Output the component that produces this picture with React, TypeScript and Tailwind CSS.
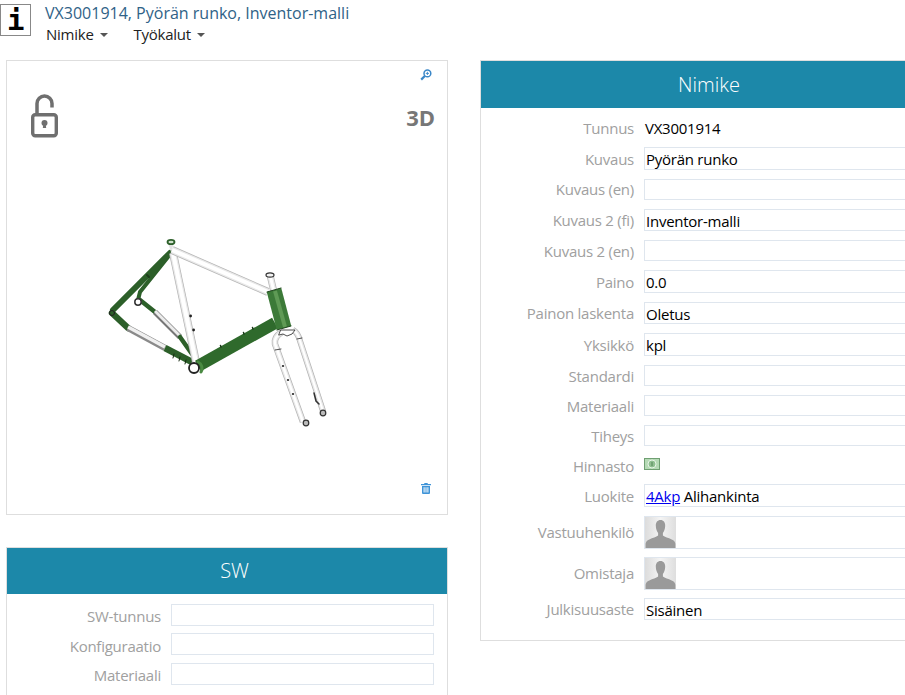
import { ReactNode } from "react";

const Unlock = () => (
  <svg width="30" height="44" viewBox="0 0 30 44" fill="none">
    <path d="M7 19V9.500a7.500 7.500 0 0 1 15 0V13.500" stroke="#6f6f6f" strokeWidth="3.500" />
    <rect x="2.700" y="20.700" width="23.600" height="21" rx="2.500" stroke="#6f6f6f" strokeWidth="3.400" />
    <circle cx="14.500" cy="29" r="3" fill="#6f6f6f" />
    <path d="M13.300 30h2.400l.5 4h-3.400z" fill="#6f6f6f" />
  </svg>
);

const ZoomIcon = () => (
  <svg width="12" height="12" viewBox="0 0 12 12" fill="none">
    <circle cx="7.400" cy="4.400" r="3.400" stroke="#3a87c8" strokeWidth="1.500" />
    <path d="M4.800 7 1.200 10.600" stroke="#3a87c8" strokeWidth="2.200" />
    <path d="M5.800 4.400h3.200M7.400 2.800V6" stroke="#3a87c8" strokeWidth="0.900" />
  </svg>
);

const TrashIcon = () => (
  <svg width="10" height="11" viewBox="0 0 10 11" fill="#3f94d8">
    <path d="M3.500 0h3l.4 1H10v1.200H0V1h3.100z" />
    <path d="M1 3h8v7a1 1 0 0 1-1 1H2a1 1 0 0 1-1-1zm1.600 1.200v5.400h1V4.200zm1.900 0v5.400h1V4.200zm1.900 0v5.400h1V4.200z" fillRule="evenodd" />
  </svg>
);

const Money = () => (
  <svg width="16" height="12" viewBox="0 0 16 12" className="block">
    <rect width="16" height="12" fill="#6f9f72" />
    <rect x="1" y="1" width="14" height="10" fill="#b5dab5" />
    <circle cx="8" cy="6" r="4" fill="#8fbf90" stroke="#e6f4e6" />
    <path d="M8 4v4" stroke="#54845a" strokeWidth="1" />
  </svg>
);

const Avatar = () => (
  <svg width="31" height="31" viewBox="0 0 31 31" className="-ml-px block">
    <defs>
      <linearGradient id="avatarBg" x1="0" y1="0" x2="1" y2="0">
        <stop offset="0" stopColor="#dcdcdc" />
        <stop offset="0.5" stopColor="#f4f4f4" />
        <stop offset="1" stopColor="#dedede" />
      </linearGradient>
    </defs>
    <rect width="31" height="31" fill="url(#avatarBg)" />
    <path
      d="M15.500 3c3 0 4.800 2.400 4.700 5.800-.1 3-.9 5.400-2.300 7.200v2.600c1.800 1.400 5.400 2.400 8.800 3.800 2.400 1 3.400 2.400 3.700 4.400V31H.6v-4.200c.3-2 1.300-3.400 3.700-4.400 3.400-1.400 7-2.400 8.800-3.800V16c-1.400-1.800-2.200-4.200-2.300-7.200C10.700 5.400 12.500 3 15.500 3z"
      fill="#9a9a9a"
    />
  </svg>
);

// a white painted tube: soft grey body with a bright middle
const Tube = ({ d, w }: { d: string; w: number }) => (
  <>
    <path d={d} stroke="#b4b4b4" strokeWidth={w} strokeLinecap="butt" />
    <path d={d} stroke="#e9e9e9" strokeWidth={w - 1.5} strokeLinecap="butt" />
    <path d={d} stroke="#ffffff" strokeWidth={w - 4} strokeLinecap="butt" />
  </>
);

// the frame render: tubes as thick strokes, blurred a bit like the scaled picture
const BikeFrame = () => (
  <svg width="250" height="220" viewBox="0 0 250 220" fill="none" strokeLinecap="round">
    <g style={{ filter: "blur(0.5px)" }}>
      {/* seat stays */}
      <path d="M80 33 23 90" stroke="#2c5f29" strokeWidth="6" />
      <path d="M78 37 50 72 48 80" stroke="#2c5f29" strokeWidth="4" />
      <path d="M59 57l-2-2" stroke="#1c3c1a" strokeWidth="2" />
      {/* chain stays */}
      <path d="M22 93 38 108" stroke="#2c5f29" strokeWidth="6.500" />
      <path d="M38 108 75 128" stroke="#8a8a8a" strokeWidth="6.500" strokeLinecap="butt" />
      <path d="M38 107 75 127" stroke="#f0f0f0" strokeWidth="3.500" strokeLinecap="butt" />
      <path d="M75 128 102 142" stroke="#2c5f29" strokeWidth="6.500" strokeLinecap="butt" />
      <path d="M84 134l-1 4M90 137l-1 4M96 140l-1 4" stroke="#14280f" strokeWidth="1" />
      <path d="M50 80 65 92" stroke="#2c5f29" strokeWidth="4.500" />
      <path d="M65 92 90 117" stroke="#777" strokeWidth="5.500" strokeLinecap="butt" />
      <path d="M65 91 90 116" stroke="#ececec" strokeWidth="3" strokeLinecap="butt" />
      <path d="M90 117 102 134" stroke="#2c5f29" strokeWidth="4.500" />
      {/* seat tube */}
      <Tube d="M83 33 106 142" w={8} />
      <circle cx="100.600" cy="96" r="1.400" fill="#222" />
      <circle cx="103.600" cy="110" r="1.400" fill="#222" />
      {/* top tube */}
      <Tube d="M82 30 178 72" w={8} />
      {/* seat post top */}
      <path d="M78 23 81 32 84 23" fill="#e2e2e2" />
      <ellipse cx="81" cy="22" rx="3.500" ry="2.200" fill="#cfe0cc" stroke="#2c5f29" strokeWidth="1.800" />
      {/* down tube */}
      <path d="M108 146 185 103" stroke="#2f6a2c" strokeWidth="12" strokeLinecap="butt" />
      <path d="M131 127l-.5-1.500M154 114l-.5-1.500M163 109l-.5-1.500" stroke="#1b3b1a" strokeWidth="1.500" />
      {/* bottom bracket */}
      <path d="M108 142a7 7 0 0 1 3 10" stroke="#4a8a42" strokeWidth="3" />
      <circle cx="104" cy="148" r="5" fill="#fff" stroke="#222" strokeWidth="1.800" />
      {/* dropouts */}
      <circle cx="48" cy="82" r="3.200" fill="#fff" stroke="#333" strokeWidth="1.500" />
      <circle cx="22" cy="93" r="2.500" fill="#2c5f29" stroke="#222" strokeWidth="1" />
      {/* steerer top */}
      <Tube d="M180 55 184 72" w={7} />
      <ellipse cx="180" cy="55" rx="4" ry="2.200" fill="#f4f4f4" stroke="#333" strokeWidth="1.200" />
      {/* head tube */}
      <path d="M184 70 194 108" stroke="#3c7a38" strokeWidth="15" strokeLinecap="butt" />
      <path d="M185 71 195 107" stroke="#5f9a55" strokeWidth="4" strokeLinecap="butt" />
      <path d="M177 72l14-4M187 110l14-4" stroke="#20451e" strokeWidth="1" />
      {/* fork */}
      <Tube d="M192 112c-5 3-8 7-7 12l28 78" w={6.5} />
      <Tube d="M203 110c4 2 6 7 7 11l23 70" w={6} />
      <path d="M191 110h14l-3 4-5 2-4-2-4 1z" fill="#fff" stroke="#222" strokeWidth="0.800" />
      <path d="M185 130l6-1M207 119l5-1" stroke="#222" strokeWidth="0.800" />
      <circle cx="193" cy="146" r="1.100" fill="#222" />
      <circle cx="198" cy="160" r="1.100" fill="#222" />
      <circle cx="203" cy="174" r="1.100" fill="#222" />
      <path d="M224 173l2 8 3 3" stroke="#333" strokeWidth="1.500" />
      <circle cx="216" cy="203" r="2.800" fill="#bbb" stroke="#333" strokeWidth="1.200" />
      <circle cx="233" cy="193" r="2.800" fill="#bbb" stroke="#333" strokeWidth="1.200" />
    </g>
  </svg>
);

const labelClass = "flex w-[163px] shrink-0 items-center justify-end pr-[10px] pt-px text-[#a0a0a0]";

// filled boxes are a bit taller than empty ones in the original form
const Field = ({ label, children }: { label: string; children?: ReactNode }) => (
  <div className={`flex items-start ${children ? "h-[31.6px]" : "h-[30px]"}`}>
    <label className={`${labelClass} ${children ? "h-[22.6px]" : "h-[21px]"}`}>{label}</label>
    <div className={`flex-1 border border-[#dfe6ee] pl-px leading-[22px] text-black ${children ? "h-[22.6px]" : "h-[21px]"}`}>
      {children}
    </div>
  </div>
);

const PlainField = ({ label, rowClass, children }: { label: string; rowClass: string; children: ReactNode }) => (
  <div className={`flex items-start ${rowClass}`}>
    <label className={`${labelClass} h-[22px]`}>{label}</label>
    <div className="flex-1 pl-px leading-[22px] text-black">{children}</div>
  </div>
);

const AvatarField = ({ label }: { label: string }) => (
  <div className="flex h-[41px] items-start">
    <label className={`${labelClass} h-[33px]`}>{label}</label>
    <div className="h-[33px] flex-1 border border-[#dfe6ee] pl-px">
      <Avatar />
    </div>
  </div>
);

const SwRow = ({ label }: { label: string }) => (
  <div className="flex h-[29.5px] items-center">
    <label className="w-[164px] shrink-0 pr-[10px] pt-[3px] text-right text-[#a0a0a0]">{label}</label>
    <div className="h-[22px] flex-1 border border-[#dfe6ee]" />
  </div>
);

export default function App() {
  return (
    <div className="h-[695px] w-[905px] overflow-hidden bg-white text-[15px] tracking-[-0.25px] font-['Open_Sans','Noto_Sans',sans-serif]">
      <header className="flex h-[60px]">
        <div className="mt-[4px] flex h-[32px] w-[31px] items-center justify-center border border-[#888] bg-white">
          <span className="font-['DejaVu_Sans_Mono',monospace] text-[29px] font-bold leading-none text-black">i</span>
        </div>
        <div className="ml-[14px]">
          <h1 className="text-[16px] leading-[26px] tracking-normal text-[#2f6287]">VX3001914, Pyörän runko, Inventor-malli</h1>
          <nav className="-mt-[2px] ml-px flex gap-[26px] leading-[20px] text-[#222]">
            <span className="flex items-center gap-[6px]">
              Nimike <i className="mt-px border-x-[4px] border-t-[4px] border-x-transparent border-t-[#555]" />
            </span>
            <span className="flex items-center gap-[6px]">
              Työkalut <i className="mt-px border-x-[4px] border-t-[4px] border-x-transparent border-t-[#555]" />
            </span>
          </nav>
        </div>
      </header>

      <main className="flex items-start">
        <div className="ml-[6px] w-[442px] shrink-0">
          <section className="relative h-[455px] border border-[#dedede]">
            <div className="absolute left-[23px] top-[33px]">
              <Unlock />
            </div>
            <div className="absolute right-[15px] top-[8px]">
              <ZoomIcon />
            </div>
            <div className="absolute right-[12px] top-[43px] text-[22px] font-bold leading-[26px] tracking-normal text-[#777]">3D</div>
            <div className="absolute left-[83px] top-[159px]">
              <BikeFrame />
            </div>
            <div className="absolute right-[16px] top-[422px]">
              <TrashIcon />
            </div>
          </section>

          <section className="mt-[32px] border border-[#dedede]">
            <div className="flex h-[46px] items-center justify-center bg-[#1c88a9] pl-[15px] text-[20px] font-light tracking-normal text-white">SW</div>
            <div className="pb-[10px] pr-[13px] pt-[6px]">
              <SwRow label="SW-tunnus" />
              <SwRow label="Konfiguraatio" />
              <SwRow label="Materiaali" />
            </div>
          </section>
        </div>

        <section className="ml-[32px] w-[458px] shrink-0 border border-[#dedede]">
          <div className="flex h-[47px] items-center justify-center bg-[#1c88a9] text-[20px] font-light tracking-normal text-white">Nimike</div>
          <div className="pb-[11px] pt-[9px]">
            <PlainField label="Tunnus" rowClass="h-[30px]">VX3001914</PlainField>
            <Field label="Kuvaus">Pyörän runko</Field>
            <Field label="Kuvaus (en)" />
            <Field label="Kuvaus 2 (fi)">Inventor-malli</Field>
            <Field label="Kuvaus 2 (en)" />
            <Field label="Paino">0.0</Field>
            <Field label="Painon laskenta">Oletus</Field>
            <Field label="Yksikkö">kpl</Field>
            <Field label="Standardi" />
            <Field label="Materiaali" />
            <Field label="Tiheys" />
            <PlainField label="Hinnasto" rowClass="h-[29px]">
              <div className="-ml-px mt-[3px]">
                <Money />
              </div>
            </PlainField>
            <Field label="Luokite">
              <a className="text-[#0000ee] underline">4Akp</a> Alihankinta
            </Field>
            <AvatarField label="Vastuuhenkilö" />
            <AvatarField label="Omistaja" />
            <Field label="Julkisuusaste">Sisäinen</Field>
          </div>
        </section>
      </main>
    </div>
  );
}
